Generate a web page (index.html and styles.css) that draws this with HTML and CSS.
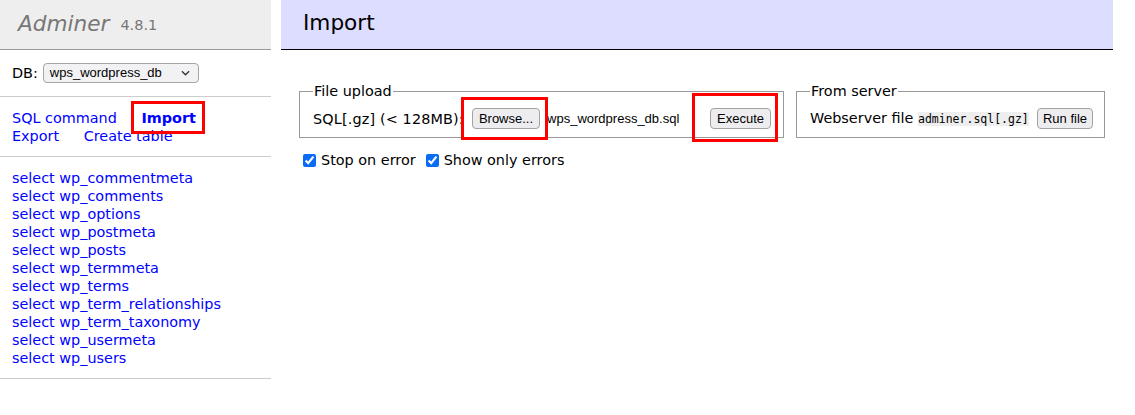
FILE: index.html
```html
<!DOCTYPE html>
<html lang="en">
<head>
<meta charset="utf-8">
<title>Import - Adminer</title>
<link rel="stylesheet" href="styles.css">
</head>
<body>
<div class="page">
  <aside class="menu">
    <h1 class="brand"><span class="brand-name">Adminer</span> <span class="version">4.8.1</span></h1>
    <p class="dbrow">
      <span>DB:</span>
      <span class="select">wps_wordpress_db<svg class="chev" viewBox="0 0 10 6" width="9" height="6"><path d="M1 1l4 4 4-4" fill="none" stroke="#333" stroke-width="1.4"/></svg></span>
    </p>
    <p class="links">
      <a href="#">SQL command</a> <a href="#" class="active annot annot-import">Import</a><br>
      <a href="#">Export</a> <a href="#">Create table</a>
    </p>
    <ul class="tables">
      <li><a href="#">select wp_commentmeta</a></li>
      <li><a href="#">select wp_comments</a></li>
      <li><a href="#">select wp_options</a></li>
      <li><a href="#">select wp_postmeta</a></li>
      <li><a href="#">select wp_posts</a></li>
      <li><a href="#">select wp_termmeta</a></li>
      <li><a href="#">select wp_terms</a></li>
      <li><a href="#">select wp_term_relationships</a></li>
      <li><a href="#">select wp_term_taxonomy</a></li>
      <li><a href="#">select wp_usermeta</a></li>
      <li><a href="#">select wp_users</a></li>
    </ul>
  </aside>
  <main class="content">
    <h2 class="title">Import</h2>
    <div class="fieldsets">
      <fieldset class="fs fs-upload">
        <legend>File upload</legend>
        <div class="fs-row">
          <span class="sqllabel">SQL[.gz] (&lt; 128MB):</span>
          <span class="annot annot-browse"><button class="btn" type="button">Browse...</button></span>
          <span class="filename">wps_wordpress_db.sql</span>
          <span class="annot annot-exec"><button class="btn" type="button">Execute</button></span>
        </div>
      </fieldset>
      <fieldset class="fs fs-server">
        <legend>From server</legend>
        <div class="fs-row">
          <span class="nowrap">Webserver file <code>adminer.sql[.gz]</code></span>
          <button class="btn" type="button">Run file</button>
        </div>
      </fieldset>
    </div>
    <p class="opts">
      <label class="chk"><input type="checkbox" checked> Stop on error</label>
      <label class="chk"><input type="checkbox" checked> Show only errors</label>
    </p>
  </main>
</div>
</body>
</html>
```
FILE: styles.css
```css
* { box-sizing: border-box; }
html, body { margin: 0; background: #fff; }
body {
  font-family: "DejaVu Sans", Verdana, sans-serif;
  font-size: 14.4px;
  line-height: 18px;
  color: #000;
}
a { color: #00f; text-decoration: none; }
.page { display: flex; align-items: flex-start; }

.menu { width: 271px; flex: none; }
.brand {
  margin: 0;
  height: 50px;
  padding: 0 0 2px 18px;
  display: flex;
  align-items: center;
  background: #eee;
  border-bottom: 1px solid #999;
  font-weight: normal;
  color: #777;
  font-size: 21.6px;
  line-height: 27px;
}
.brand-name { font-style: italic; }
.version { font-size: 14.5px; margin-left: 11px; padding-top: 4px; }

.dbrow {
  margin: 0;
  height: 47px;
  padding: 0 12px;
  display: flex;
  align-items: center;
  gap: 5px;
  border-bottom: 1px solid #ccc;
}
.select {
  display: inline-flex;
  align-items: center;
  justify-content: space-between;
  width: 156px;
  height: 20px;
  padding: 0 8px 0 6px;
  border: 1px solid #a6a6a6;
  border-radius: 4px;
  background: #f2f2f4;
  font-family: "Liberation Sans", Arial, sans-serif;
  font-size: 13px;
}
.chev { flex: none; }

.links {
  margin: 0;
  padding: 11.5px 12px;
  border-bottom: 1px solid #ccc;
}
.links a { margin-right: 20px; white-space: nowrap; }
.links a.active { font-weight: bold; }

.tables {
  list-style: none;
  margin: 0;
  padding: 11.5px 12px 11px;
  border-bottom: 1px solid #ccc;
}

.annot { position: relative; display: inline-block; }
.annot::after {
  content: "";
  position: absolute;
  border: 3px solid #f00;
  pointer-events: none;
}
.annot-import::after { left: -10px; right: -9px; top: -8px; bottom: -7px; }
.annot-browse::after { left: -11px; right: -8px; top: -11px; bottom: -11px; }
.annot-exec::after { left: -18px; right: -7px; top: -15px; bottom: -13px; }

.content { margin-left: 10px; width: 832px; padding-left: 18px; }
.title {
  margin: 0 0 20px -18px;
  height: 50px;
  padding: 0 0 5px 22px;
  display: flex;
  align-items: center;
  background: #ddf;
  border-bottom: 1px solid #000;
  font-weight: normal;
  font-size: 21.6px;
  line-height: 27px;
}

.fieldsets { display: flex; gap: 12px; align-items: flex-start; padding-top: 12px; }
.fs {
  margin: 0;
  border: 1px solid #999;
  padding: 7px 11px 7px 13px;
  min-width: 0;
}
.fs legend { padding: 0 1px; line-height: 18px; }
.fs-upload { width: 485px; }
.fs-server { width: 309px; }
.fs-row { display: flex; align-items: center; height: 23px; white-space: nowrap; }
.fs-row > * { flex: none; }

.btn {
  height: 21px;
  padding: 0 5px;
  border: 1px solid #a3a3a3;
  border-radius: 4px;
  background: #ededf0;
  font-family: "Liberation Sans", Arial, sans-serif;
  font-size: 13px;
  color: #000;
  line-height: 19px;
}
.sqllabel { letter-spacing: 0.15px; }
.fs-upload .annot-browse { margin-left: 8px; }
.annot-browse .btn { padding: 0 6px; }
.filename {
  font-family: "Liberation Sans", Arial, sans-serif;
  font-size: 13px;
  margin-left: 7px;
  width: 163px;
}
.annot-exec .btn { padding: 0 6px; }
code {
  font-family: "DejaVu Sans Mono", "Liberation Mono", monospace;
  font-size: 11.5px;
  background: #eee;
}
.fs-server .fs-row { justify-content: space-between; }
.fs-server .btn { padding: 0 5px; }

.opts { margin: 13px 0 0; display: flex; gap: 6px; }
.chk { display: inline-flex; align-items: center; gap: 5px; }
.chk input {
  margin: 0 0 0 4px;
  width: 13px;
  height: 13px;
  accent-color: #0a6cf5;
}
```
